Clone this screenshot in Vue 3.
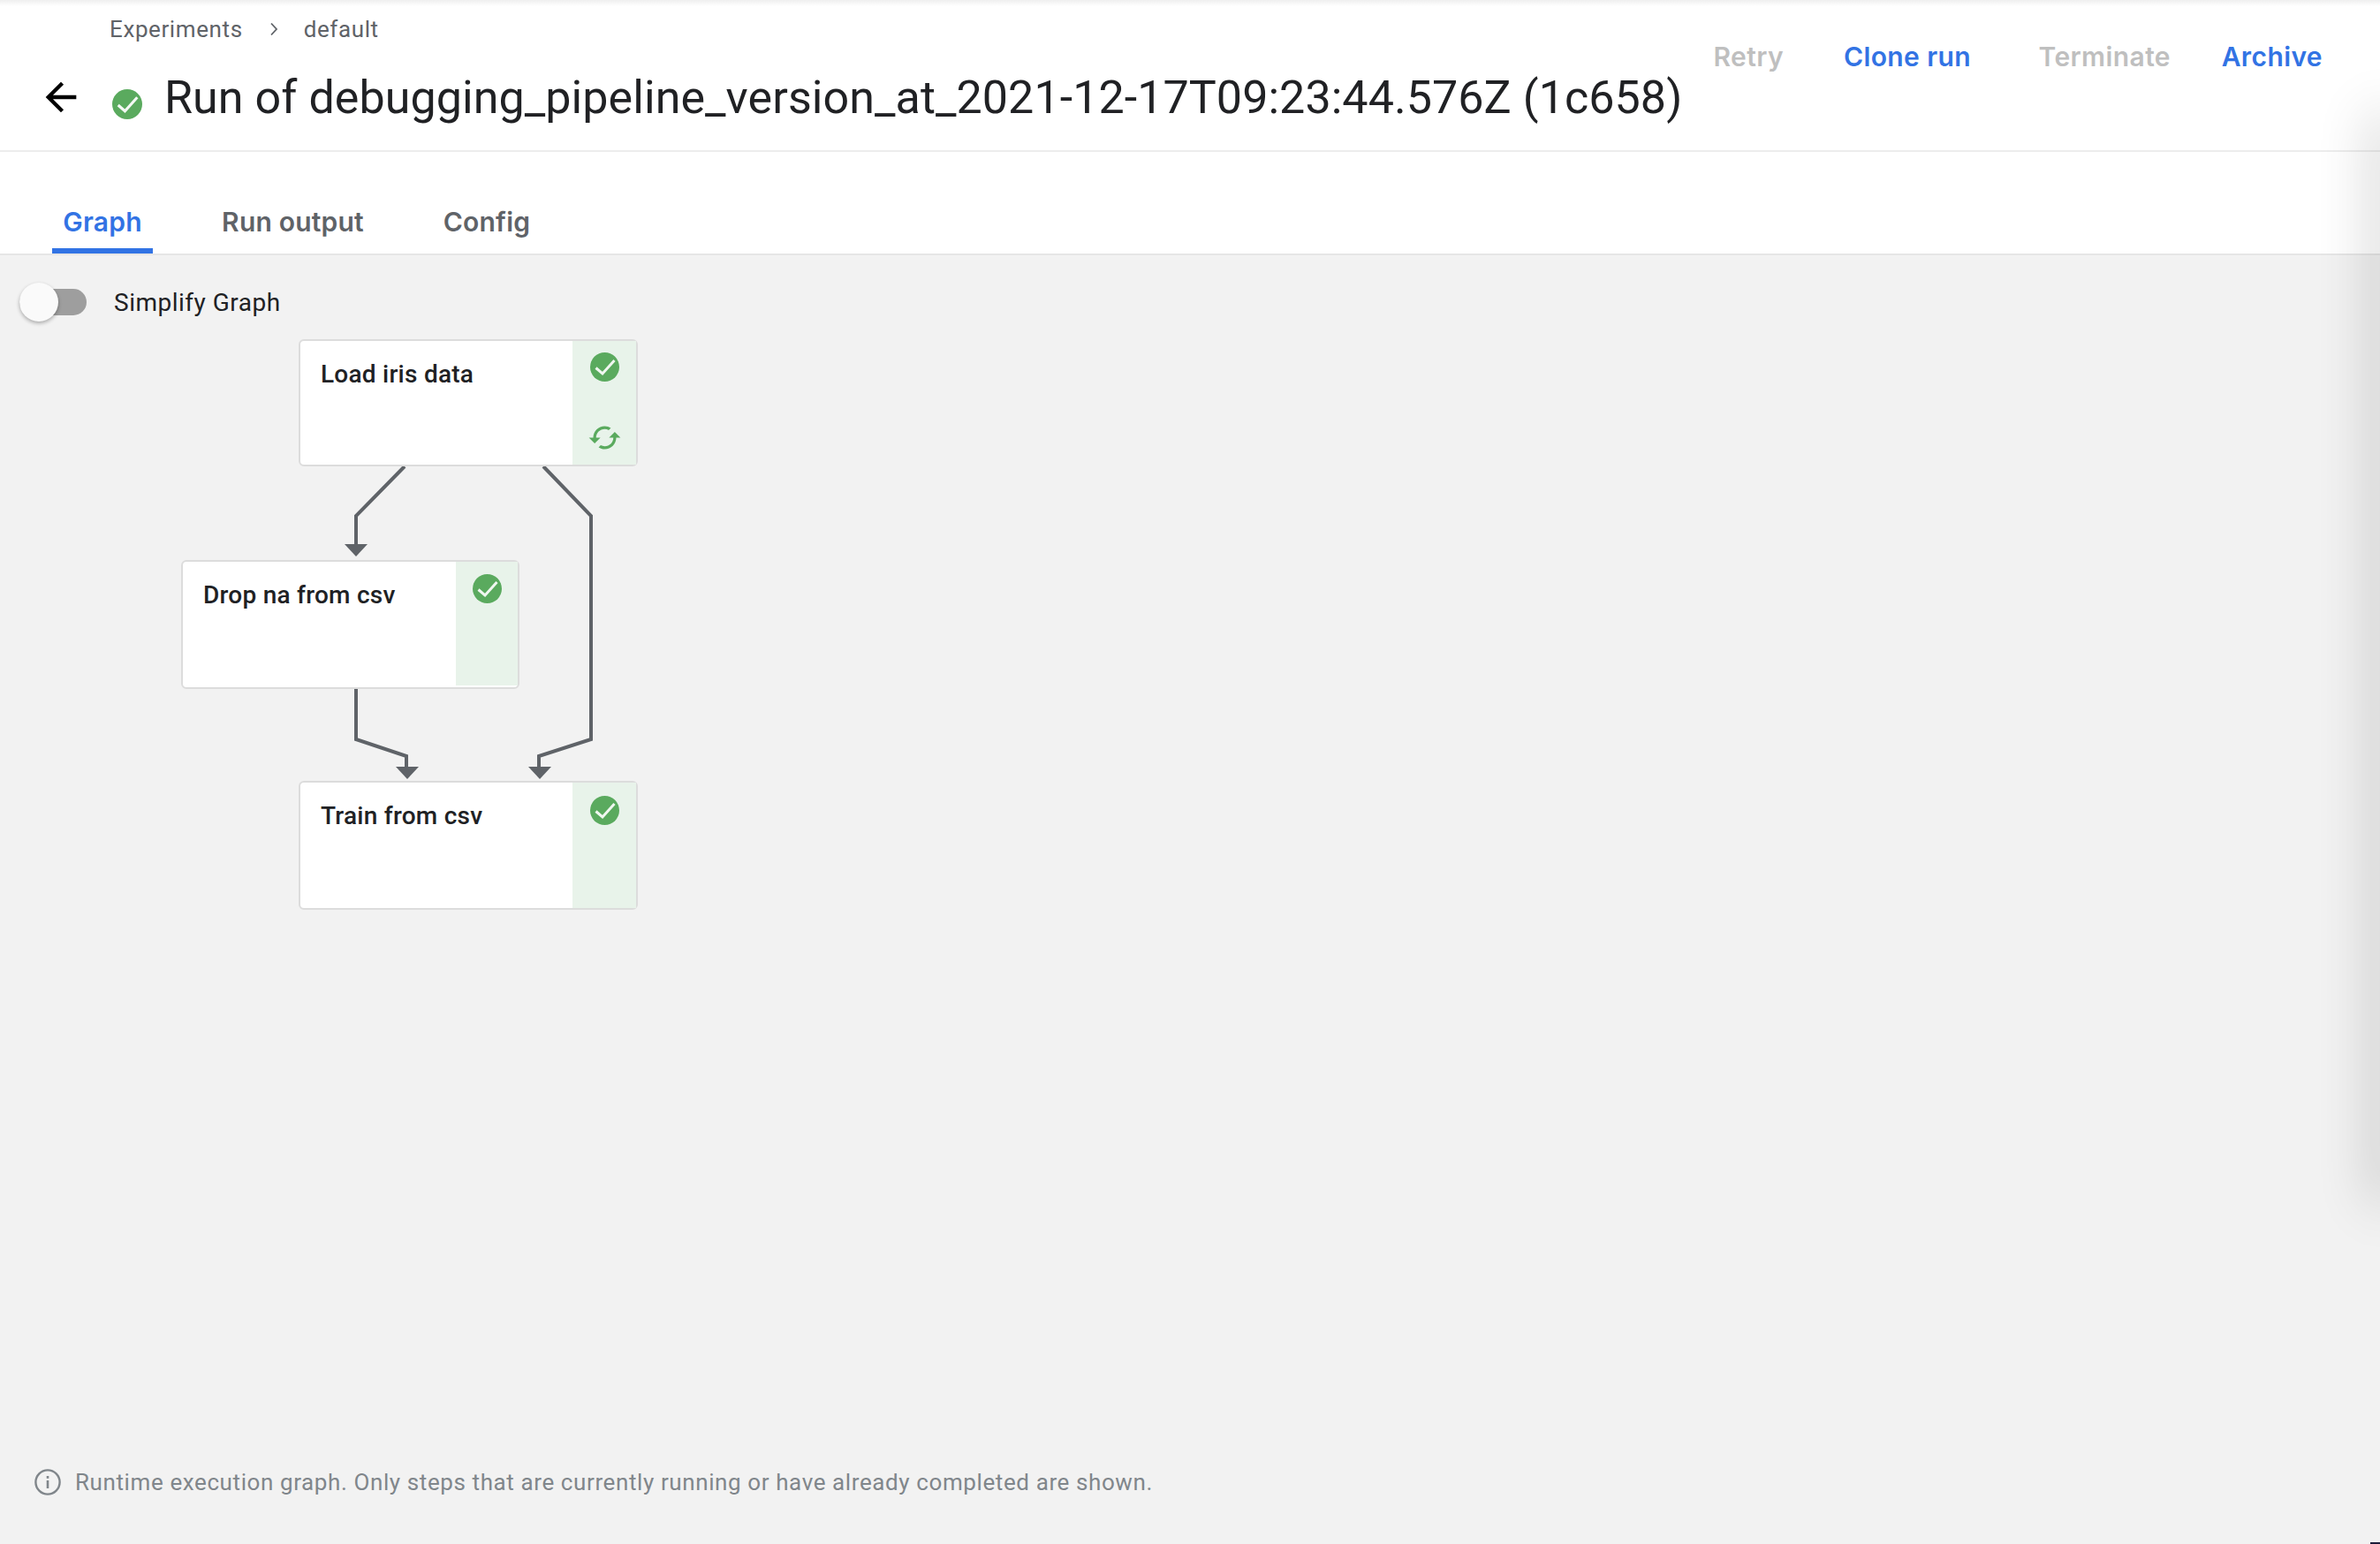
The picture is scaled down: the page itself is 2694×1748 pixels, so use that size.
<template>
  <div class="page">
    <header class="top">
      <div class="heading">
        <nav class="crumbs">
          <span>Experiments</span>
          <svg class="chev" width="10" height="16" viewBox="0 0 10 16"><path d="M2 1.5 8 8l-6 6.5" fill="none" stroke="#5f6368" stroke-width="1.8" /></svg>
          <span>default</span>
        </nav>
        <div class="title-row">
          <svg class="back" width="52" height="52" viewBox="0 0 24 24"><path d="M20 11H7.83l5.59-5.59L12 4l-8 8 8 8 1.41-1.41L7.83 13H20v-2z" fill="#000" /></svg>
          <svg class="status" width="34" height="34" viewBox="0 0 33 33">
            <circle cx="16.5" cy="16.5" r="16.5" fill="#5aaa5e" />
            <polyline points="6.5,17.5 14,24 27.5,9" fill="none" stroke="#f4f9f4" stroke-width="3" />
          </svg>
          <h1>Run of debugging_pipeline_version_at_2021-12-17T09:23:44.576Z (1c658)</h1>
        </div>
      </div>
      <div class="actions">
        <button v-for="a in actions" :key="a.label" :class="{ off: a.off }" :style="{ width: a.width + 'px' }">{{ a.label }}</button>
      </div>
    </header>

    <div class="tabs">
      <div v-for="t in tabs" :key="t.label" class="tab" :class="{ active: t.active }" :style="{ width: t.width + 'px' }">{{ t.label }}</div>
    </div>

    <main class="content">
      <label class="simplify">
        <span class="switch"><span class="thumb"></span></span>
        <span>Simplify Graph</span>
      </label>

      <div class="canvas">
        <svg class="edges" width="800" height="720" viewBox="0 0 800 720">
          <g fill="none" stroke="#5f6368" stroke-width="4" transform="translate(0 -366)">
            <path d="M458 528 403 584V618" />
            <path d="M615 528 669 584V837L610 856V870" />
            <path d="M403 780V837L460 856V870" />
          </g>
          <g fill="#5f6368" transform="translate(0 -366)">
            <path d="M390 616h26l-13 14z" />
            <path d="M598 868h26l-13 14z" />
            <path d="M448 868h26l-13 14z" />
          </g>
        </svg>

        <div v-for="n in nodes" :key="n.label" class="node" :style="{ left: n.x + 'px', top: n.y + 'px', width: n.w + 'px', height: n.h + 'px' }">
          <div class="name">{{ n.label }}</div>
          <div class="side" :class="{ short: n.short }" :style="{ paddingTop: n.pad + 'px' }">
            <svg width="33" height="33" viewBox="0 0 33 33">
              <circle cx="16.5" cy="16.5" r="16.5" fill="#5aaa5e" />
              <polyline points="6.5,17.5 14,24 27.5,9" fill="none" stroke="#f0f7f0" stroke-width="3" />
            </svg>
            <svg v-if="n.cached" class="cached" width="39" height="39" viewBox="0 0 24 24">
              <path d="M19 8l-4 4h3c0 3.31-2.69 6-6 6-1.01 0-1.97-.25-2.8-.7l-1.46 1.46C8.97 19.54 10.43 20 12 20c4.42 0 8-3.58 8-8h3l-4-4zM6 12c0-3.31 2.69-6 6-6 1.01 0 1.97.25 2.8.7l1.46-1.46C15.03 4.46 13.57 4 12 4c-4.42 0-8 3.58-8 8H1l4 4 4-4H6z" fill="#5aaa5e" />
            </svg>
          </div>
        </div>
      </div>

      <footer class="note">
        <svg width="30" height="30" viewBox="0 0 30 30">
          <circle cx="15" cy="15" r="13.6" fill="none" stroke="#80868b" stroke-width="2.4" />
          <rect x="13.7" y="13" width="2.6" height="9" fill="#80868b" />
          <rect x="13.7" y="8" width="2.6" height="2.8" fill="#80868b" />
        </svg>
        <span>Runtime execution graph. Only steps that are currently running or have already completed are shown.</span>
      </footer>
    </main>

    <div class="edge-shadow"></div>
    <div class="corner"></div>
  </div>
</template>

<script setup>
const actions = [
  { label: "Retry", off: true, width: 100 },
  { label: "Clone run", off: false, width: 212 },
  { label: "Terminate", off: true, width: 226 },
  { label: "Archive", off: false, width: 172 },
];

const tabs = [
  { label: "Graph", active: true, width: 114 },
  { label: "Run output", width: 187 },
  { label: "Config", width: 122 },
];

// positions inside the graph canvas
const nodes = [
  { label: "Load iris data", x: 338, y: 18, w: 384, h: 144, pad: 13, cached: true },
  { label: "Drop na from csv", x: 205, y: 268, w: 383, h: 146, pad: 14, short: true },
  { label: "Train from csv", x: 338, y: 518, w: 384, h: 146, pad: 15 },
];
</script>

<style scoped>
.page {
  position: relative;
  display: flex;
  flex-direction: column;
  width: 2694px;
  height: 1748px;
  overflow: hidden;
  background: #f2f2f2;
  font-family: Roboto, "Liberation Sans", sans-serif;
}

.top {
  display: flex;
  justify-content: space-between;
  height: 172px;
  box-sizing: border-box;
  padding-right: 65px;
  background: linear-gradient(#efefef, #fff 7px);
  border-bottom: 2px solid #ededed;
}

.crumbs {
  display: flex;
  align-items: center;
  height: 30px;
  margin-top: 18px;
  padding-left: 124px;
  font-size: 26px;
  letter-spacing: 0.6px;
  color: #5f6368;
}

.chev {
  margin: 0 29px 0 30px;
}

.title-row {
  display: flex;
  align-items: center;
  height: 52px;
  margin-top: 36px;
  padding-left: 43px;
}

.status {
  margin: 15px 25px 0 32px;
}

h1 {
  margin: 2px 0 0;
  font-size: 52px;
  font-weight: 400;
  line-height: 52px;
  letter-spacing: 0.07px;
  color: #202124;
  white-space: nowrap;
}

.actions {
  display: flex;
  height: 40px;
  margin-top: 44px;
}

button {
  padding: 0;
  border: 0;
  background: none;
  font: 600 30px/38px Inter, Roboto, sans-serif;
  letter-spacing: 0.4px;
  text-align: right;
  color: #3273e4;
  white-space: nowrap;
}

button.off {
  color: #bfbfbf;
}

.tabs {
  display: flex;
  gap: 65px;
  height: 117px;
  box-sizing: border-box;
  padding-left: 59px;
  background: #fff;
  border-bottom: 2px solid #e6e6e6;
}

.tab {
  position: relative;
  height: 115px;
  padding-top: 56px;
  box-sizing: border-box;
  font-family: Inter, Roboto, sans-serif;
  font-size: 30px;
  line-height: 46px;
  font-weight: 600;
  letter-spacing: 0.2px;
  text-align: center;
  white-space: nowrap;
  color: #5f6368;
}

.tab.active {
  color: #3273e4;
  border-bottom: 6px solid #3273e4;
  border-radius: 6px 6px 0 0;
}

.content {
  flex: 1;
  display: flex;
  flex-direction: column;
}

.simplify {
  display: flex;
  align-items: center;
  gap: 31px;
  height: 44px;
  margin-top: 31px;
  margin-bottom: 2px;
  padding-left: 22px;
  font-size: 28px;
  letter-spacing: 0.5px;
  color: #202124;
}

.switch {
  position: relative;
  display: block;
  width: 76px;
  height: 30px;
  border-radius: 15px;
  background: #9e9e9e;
}

.thumb {
  position: absolute;
  left: 0;
  top: -7px;
  width: 44px;
  height: 44px;
  border-radius: 50%;
  background: #fafafa;
  box-shadow: 0 2px 4px rgba(0, 0, 0, 0.3);
}

.canvas {
  position: relative;
  height: 720px;
}

.edges {
  position: absolute;
  left: 0;
  top: 0;
}

.node {
  position: absolute;
  display: flex;
  justify-content: space-between;
  box-sizing: border-box;
  background: #fff;
  border: 2px solid #dcdcdc;
  border-radius: 6px;
}

.name {
  padding: 21px 0 0 23px;
  font-size: 28px;
  font-weight: 500;
  line-height: 34px;
  letter-spacing: 0.25px;
  color: #202124;
}

.side {
  display: flex;
  flex-direction: column;
  align-items: center;
  width: 72px;
  box-sizing: border-box;
  background: #e8f3ea;
}

.side.short {
  width: 70px;
  margin-bottom: 2px;
}

.cached {
  margin-top: 44px;
}

.note {
  display: flex;
  align-items: center;
  gap: 16px;
  margin-top: auto;
  margin-bottom: 55px;
  padding-left: 39px;
  font-size: 26px;
  letter-spacing: 0.6px;
  color: #80868b;
}

.edge-shadow {
  position: absolute;
  top: 130px;
  right: -12px;
  width: 12px;
  height: 1230px;
  border-radius: 6px;
  box-shadow: 0 0 60px 4px rgba(0, 0, 0, 0.3);
}

.corner {
  position: absolute;
  right: 0;
  bottom: 0;
  width: 11px;
  height: 2px;
  background: #1c1c3a;
}
</style>
